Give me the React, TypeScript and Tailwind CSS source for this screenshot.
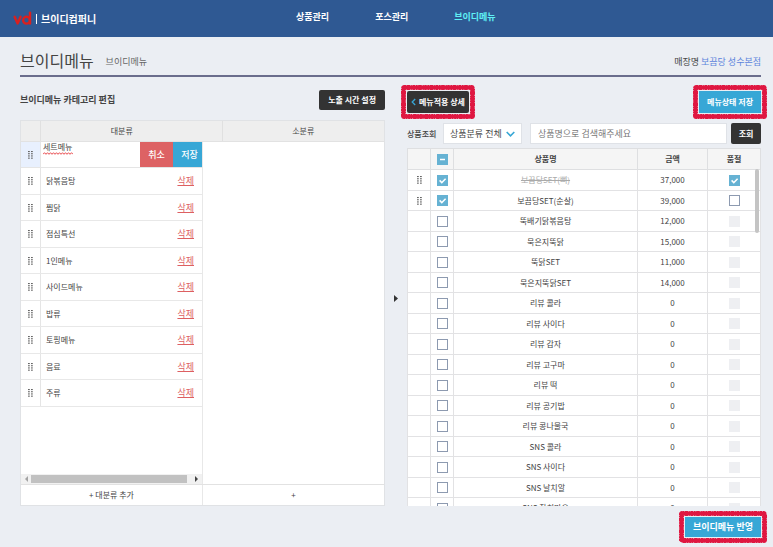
import { useEffect, useRef, type ReactNode } from "react";
import { clsx } from "clsx";

const categories = [
  "닭볶음탕",
  "찜닭",
  "점심특선",
  "1인메뉴",
  "사이드메뉴",
  "밥류",
  "토핑메뉴",
  "음료",
  "주류",
];

type SoldOut = "on" | "off" | "disabled";
type Product = { name: string; price: string; used: boolean; soldOut: SoldOut };

const products: Product[] = [
  { name: "보끔당SET(뼈)", price: "37,000", used: true, soldOut: "on" },
  { name: "보끔당SET(순살)", price: "39,000", used: true, soldOut: "off" },
  { name: "뚝배기닭볶음탕", price: "12,000", used: false, soldOut: "disabled" },
  { name: "묵은지뚝닭", price: "15,000", used: false, soldOut: "disabled" },
  { name: "뚝닭SET", price: "11,000", used: false, soldOut: "disabled" },
  { name: "묵은지뚝닭SET", price: "14,000", used: false, soldOut: "disabled" },
  { name: "리뷰 콜라", price: "0", used: false, soldOut: "disabled" },
  { name: "리뷰 사이다", price: "0", used: false, soldOut: "disabled" },
  { name: "리뷰 감자", price: "0", used: false, soldOut: "disabled" },
  { name: "리뷰 고구마", price: "0", used: false, soldOut: "disabled" },
  { name: "리뷰 떡", price: "0", used: false, soldOut: "disabled" },
  { name: "리뷰 공기밥", price: "0", used: false, soldOut: "disabled" },
  { name: "리뷰 콩나물국", price: "0", used: false, soldOut: "disabled" },
  { name: "SNS 콜라", price: "0", used: false, soldOut: "disabled" },
  { name: "SNS 사이다", price: "0", used: false, soldOut: "disabled" },
  { name: "SNS 날치알", price: "0", used: false, soldOut: "disabled" },
  { name: "SNS 참치마요", price: "0", used: false, soldOut: "disabled" },
];

function Grip() {
  return (
    <svg width="5" height="8" viewBox="0 0 5 8" fill="#666" aria-hidden="true" className="mx-auto">
      {[0, 2.2, 4.4, 6.6].map((y) => (
        <g key={y}>
          <rect x="0" y={y} width="1.8" height="1.1" />
          <rect x="3" y={y} width="1.8" height="1.1" />
        </g>
      ))}
    </svg>
  );
}

function Check({
  label,
  checked = false,
  disabled = false,
  mixed = false,
}: {
  label: string;
  checked?: boolean;
  disabled?: boolean;
  mixed?: boolean;
}) {
  const ref = useRef<HTMLInputElement>(null);
  useEffect(() => {
    if (ref.current) ref.current.indeterminate = mixed;
  }, [mixed]);
  return (
    <span className="mx-auto grid size-[11px] place-items-center">
      <input
        ref={ref}
        type="checkbox"
        aria-label={label}
        defaultChecked={checked}
        disabled={disabled}
        className="peer col-start-1 row-start-1 size-[11px] appearance-none border border-[#8d9ab0] bg-white checked:border-[#66b2d3] checked:bg-[#66b2d3] indeterminate:border-[#66b2d3] indeterminate:bg-[#66b2d3] disabled:border-[#eeeff2] disabled:bg-[#eeeff2]"
      />
      <svg
        viewBox="0 0 11 11"
        className={clsx(
          "pointer-events-none col-start-1 row-start-1 size-[11px]",
          mixed ? "block" : "hidden peer-checked:block",
        )}
        fill="none"
        stroke="#fff"
        strokeWidth="1.5"
        aria-hidden="true"
      >
        <path d={mixed ? "M3 5.5h5" : "M2.6 5.4l2.2 2.2 3.8-3.8"} />
      </svg>
    </span>
  );
}

/* Hand-drawn crayon outline around a control */
function Marked({ children }: { children: ReactNode }) {
  return (
    <div className="relative flex">
      {children}
      <svg
        className="pointer-events-none absolute -inset-[5px] h-[calc(100%+10px)] w-[calc(100%+10px)] overflow-visible"
        fill="none"
        stroke="#df1741"
        aria-hidden="true"
      >
        <rect x="1.5" y="1.5" rx="1" className="h-[calc(100%-3px)] w-[calc(100%-3px)]" strokeWidth="4" />
        <rect
          x="1.5"
          y="1.5"
          rx="1"
          className="h-[calc(100%-3px)] w-[calc(100%-3px)]"
          strokeWidth="5"
          strokeDasharray="1.5 0.7 3.5 1.1 1 0.6 2.2 0.9"
        />
      </svg>
    </div>
  );
}

function Logo() {
  return (
    <svg width="19" height="15" viewBox="0 0 19 15" fill="none" stroke="#d9201f" strokeWidth="2.4" strokeLinecap="round" strokeLinejoin="round" role="img" aria-label="vd">
      <path d="M1.6 5.8l3 6.6 3-6.6" />
      <circle cx="13.5" cy="9.2" r="3.4" />
      <path d="M17 1.6v11" />
    </svg>
  );
}

export default function App() {
  return (
    <div className="flex h-screen flex-col bg-[#ebeef3] font-['Noto_Sans_CJK_KR',sans-serif] text-[8px] leading-3 text-[#444]">
      <header className="flex h-[37px] shrink-0 items-center bg-[#2f5993] pl-[13px] text-white">
        <div className="flex w-[283px] shrink-0 items-center gap-1">
          <Logo />
          <span className="h-[10px] w-px bg-white" />
          <span className="text-[10px] font-bold leading-4">브이디컴퍼니</span>
        </div>
        <nav className="flex gap-[46px] pb-1 text-[9px] font-bold">
          <a href="#products">상품관리</a>
          <a href="#pos">포스관리</a>
          <a href="#menu" className="text-[#5ff0f5]">브이디메뉴</a>
        </nav>
      </header>

      <main className="flex min-h-0 flex-1 flex-col pl-5 pr-3">
        <div className="flex h-10 shrink-0 items-center border-b-2 border-[#6a6d8c] pt-2">
          <h1 className="text-[16px] leading-6">브이디메뉴</h1>
          <span className="pl-3 pt-1 text-[9px] text-[#666]">브이디메뉴</span>
          <p className="ml-auto pt-1 text-[9px]">
            매장명 <a href="#store" className="text-[#5b84dc]">보끔당 성수본점</a>
          </p>
        </div>

        <div className="flex min-h-0 flex-1 pt-[13px]">
          <section className="flex min-w-0 flex-[365] flex-col">
            <div className="flex h-5 shrink-0 items-center justify-between">
              <h2 className="text-[9px] font-bold">브이디메뉴 카테고리 편집</h2>
              <button className="h-5 rounded-xs bg-[#333] px-[9px] font-bold text-white">노출 시간 설정</button>
            </div>

            <div className="mt-[10px] flex min-h-0 flex-1 flex-col border border-[#e0e2e5] bg-white">
              <div className="flex h-[21px] shrink-0 border-b border-[#e2e2e2] bg-[#eee] text-center leading-5">
                <div className="w-5 border-r border-[#e0e0e0]" />
                <div className="flex-1">대분류</div>
                <div className="w-5 border-r border-[#e0e0e0]" />
                <div className="flex-1">소분류</div>
              </div>

              <div className="flex min-h-0 flex-1">
                <div className="flex flex-1 flex-col border-r border-[#e8e8e8]">
                  <ul className="min-h-0 flex-1 overflow-hidden">
                    <li className="flex h-[26px] border-b border-[#e5e5e5]">
                      <span className="flex w-5 items-center border-r border-[#e5e5e5] bg-[#e8f0fe]">
                        <Grip />
                      </span>
                      <span className="flex min-w-0 flex-1 flex-col items-start pl-[2px]">
                        <input
                          aria-label="대분류 이름"
                          defaultValue="세트메뉴"
                          className="h-[10px] w-full leading-[10px] outline-none"
                        />
                        <svg width="30" height="3" viewBox="0 0 30 3" fill="none" stroke="#e5383b" strokeWidth="0.9" aria-hidden="true">
                          <path d="M0 2.3L1.5.7 3 2.3 4.5.7 6 2.3 7.5.7 9 2.3 10.5.7 12 2.3 13.5.7 15 2.3 16.5.7 18 2.3 19.5.7 21 2.3 22.5.7 24 2.3 25.5.7 27 2.3 28.5.7 30 2.3" />
                        </svg>
                      </span>
                      <button className="w-[33px] bg-[#dd6264] text-[9px] font-medium text-white">취소</button>
                      <button className="w-[29px] bg-[#37a7d6] pl-1 text-[9px] font-medium text-white">저장</button>
                    </li>
                    {categories.map((name) => (
                      <li
                        key={name}
                        className="flex items-center border-b border-[#e8e8e8] odd:h-[26px] even:h-[27px]"
                      >
                        <span className="flex w-5 items-center self-stretch border-r border-[#e5e5e5]">
                          <Grip />
                        </span>
                        <span className="flex-1 pl-[5px]">{name}</span>
                        <button className="mr-2 text-[9px] text-[#dd5f62] underline underline-offset-1">삭제</button>
                      </li>
                    ))}
                  </ul>
                  <div className="flex h-[10px] items-center justify-between bg-[#f1f1f1] px-1">
                    <svg width="3" height="6" viewBox="0 0 3 6" fill="#a3a3a3" aria-hidden="true">
                      <path d="M3 0v6L0 3z" />
                    </svg>
                    <span className="ml-[3px] mr-2 h-2 flex-1 bg-[#c1c1c1]" />
                    <svg width="3" height="6" viewBox="0 0 3 6" fill="#444" aria-hidden="true">
                      <path d="M0 0v6l3-3z" />
                    </svg>
                  </div>
                </div>
                <div className="flex-1" />
              </div>

              <div className="flex h-[21px] shrink-0 border-t border-[#e2e2e2]">
                <button className="flex-1 border-r border-[#e8e8e8]">+ 대분류 추가</button>
                <button className="flex-1">+</button>
              </div>
            </div>
          </section>

          <div className="flex w-[22px] shrink-0 items-center justify-center">
            <svg width="4" height="7" viewBox="0 0 4 7" fill="#333" aria-hidden="true">
              <path d="M0 0v7l4-3.5z" />
            </svg>
          </div>

          <section className="flex min-w-0 flex-[354] flex-col">
            <div className="flex h-[23px] shrink-0 items-center justify-between">
              <Marked>
                <button className="flex h-[22px] items-center gap-[3px] rounded-xs bg-[#333] px-[4px] font-bold text-white">
                  <svg width="5" height="8" viewBox="0 0 5 8" fill="none" stroke="#37a7d6" strokeWidth="1.3" aria-hidden="true">
                    <path d="M4.2 1L1.2 4l3 3" />
                  </svg>
                  메뉴적용 상세
                </button>
              </Marked>
              <Marked>
                <button className="h-[22px] bg-[#37a7d6] px-2 font-bold text-white">메뉴상태 저장</button>
              </Marked>
            </div>

            <form className="mt-[10px] flex h-[21px] shrink-0 items-stretch" onSubmit={(e) => e.preventDefault()}>
              <label htmlFor="group" className="w-9 self-center font-medium">상품조회</label>
              <div className="relative w-[79px]">
                <select
                  id="group"
                  className="h-full w-full appearance-none border border-[#dfe2e7] bg-white pl-[6px] text-[9px] leading-3"
                >
                  <option>상품분류 전체</option>
                </select>
                <svg
                  className="pointer-events-none absolute right-[7px] top-2"
                  width="9"
                  height="6"
                  viewBox="0 0 9 6"
                  fill="none"
                  stroke="#37a7d6"
                  strokeWidth="1.6"
                  aria-hidden="true"
                >
                  <path d="M.7 1l3.8 3.8L8.3 1" />
                </svg>
              </div>
              <input
                type="search"
                aria-label="상품명 검색"
                placeholder="상품명으로 검색해주세요"
                className="ml-2 min-w-0 flex-1 border border-[#dfe2e7] bg-white pl-[7px] text-[9px] placeholder:text-[#777]"
              />
              <button className="ml-1 w-[30px] rounded-xs bg-[#333] font-bold text-white">조회</button>
            </form>

            <div className="relative mt-1 min-h-0 flex-1 overflow-hidden bg-white">
              <table className="w-full table-fixed border-collapse text-center">
                <colgroup>
                  <col className="w-[23px]" />
                  <col className="w-[23px]" />
                  <col />
                  <col className="w-[70px]" />
                  <col className="w-[53px]" />
                </colgroup>
                <thead>
                  <tr className="h-[21px] bg-[#f5f5f5] *:border *:border-[#dedfe1] *:p-0">
                    <th />
                    <th><Check label="전체 선택" mixed /></th>
                    <th className="font-bold">상품명</th>
                    <th className="font-bold">금액</th>
                    <th className="font-bold">품절</th>
                  </tr>
                </thead>
                <tbody>
                  {products.map((p) => (
                    <tr key={p.name} className="odd:h-[21px] even:h-5 *:border *:border-[#e2e2e4] *:p-0">
                      <td>{p.used && <Grip />}</td>
                      <td><Check label={`${p.name} 선택`} checked={p.used} /></td>
                      <td className={clsx(p.soldOut === "on" && "text-[#aaa] line-through")}>{p.name}</td>
                      <td>{p.price}</td>
                      <td>
                        <Check
                          label={`${p.name} 품절`}
                          checked={p.soldOut === "on"}
                          disabled={p.soldOut === "disabled"}
                        />
                      </td>
                    </tr>
                  ))}
                </tbody>
              </table>
              <span className="absolute right-[2px] top-[21px] h-16 w-1 rounded-full bg-[#c4c4c4]" />
            </div>
          </section>
        </div>

        <div className="flex h-[41px] shrink-0 items-start justify-end pt-[11px]">
          <Marked>
            <button className="h-5 bg-[#37a7d6] px-2 text-[9px] font-bold text-white">브이디메뉴 반영</button>
          </Marked>
        </div>
      </main>
    </div>
  );
}
